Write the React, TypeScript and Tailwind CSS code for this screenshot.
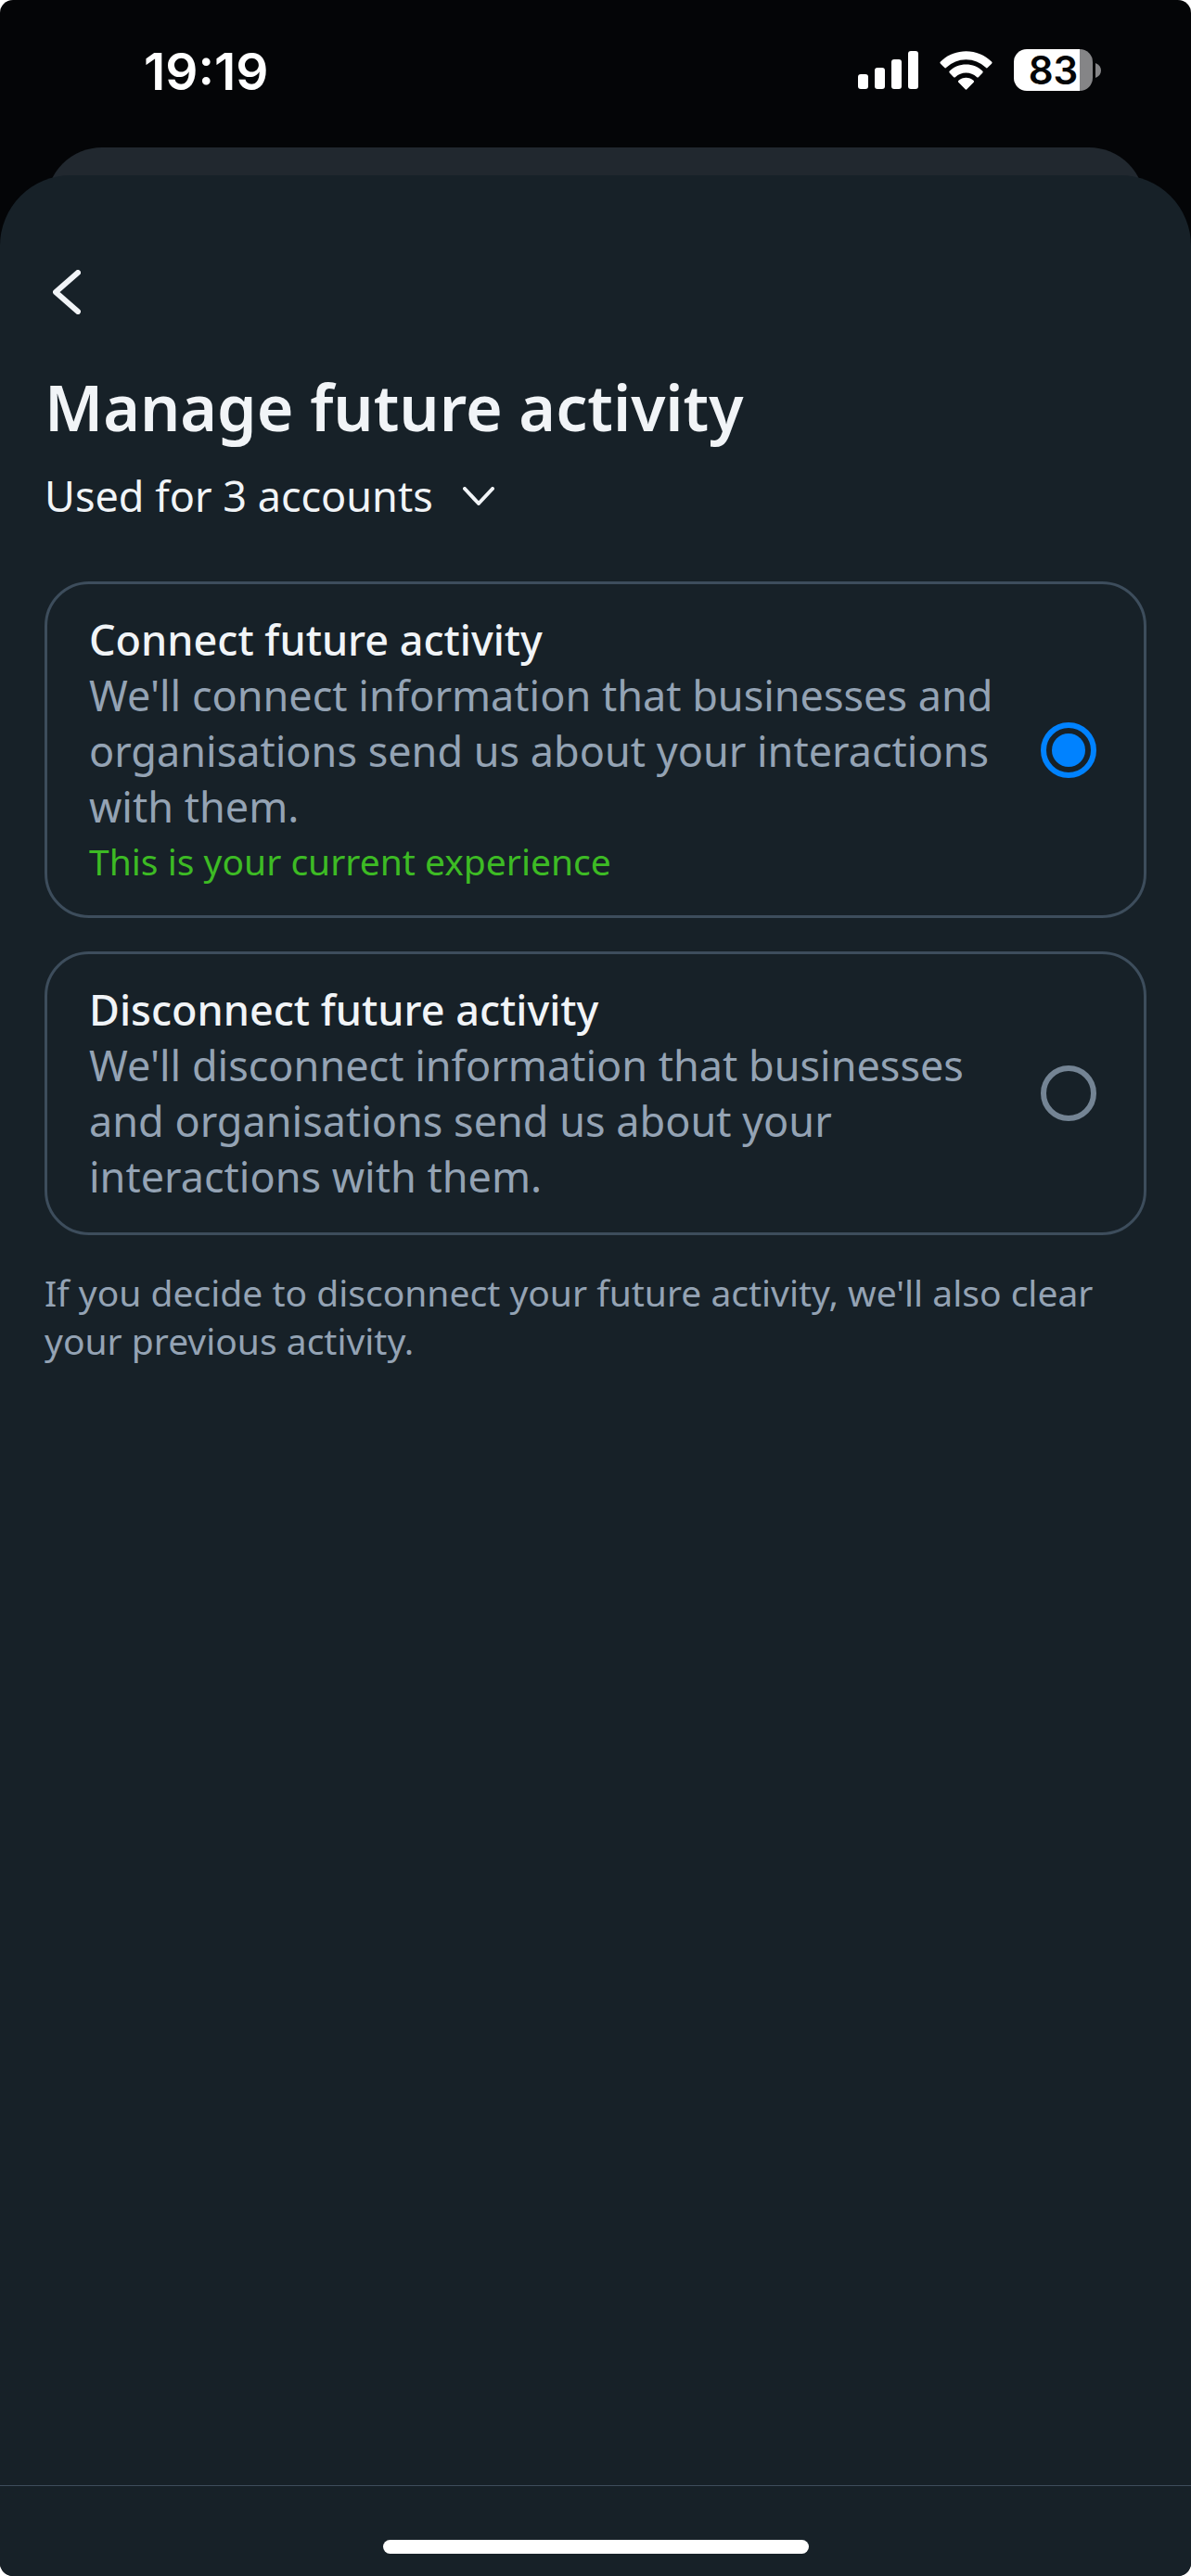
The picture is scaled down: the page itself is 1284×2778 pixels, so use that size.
import { useState } from 'react'

interface Option {
  id: string
  title: string
  description: string
}

const OPTIONS: Option[] = [
  {
    id: 'connect',
    title: 'Connect future activity',
    description:
      "We'll connect information that businesses and organisations send us about your interactions with them.",
  },
  {
    id: 'disconnect',
    title: 'Disconnect future activity',
    description:
      "We'll disconnect information that businesses and organisations send us about your interactions with them.",
  },
]

// What is saved on the account, independent of the selection on screen
const CURRENT = 'connect'

function StatusBar() {
  return (
    <header className="flex h-[159px] items-start justify-between pt-[45px] pr-[97px] pl-[155px] font-['Inter',sans-serif] text-white">
      <time className="text-[55px] leading-[64px] font-semibold">19:19</time>
      <div className="flex h-[61px] items-center gap-[23px]">
        <svg viewBox="0 0 65 41" className="h-[41px] w-[65px]" fill="currentColor" aria-hidden>
          <rect x="0" y="25" width="11" height="16" rx="3" />
          <rect x="18" y="18" width="11" height="23" rx="3" />
          <rect x="36" y="9" width="11" height="32" rx="3" />
          <rect x="54" y="0" width="11" height="41" rx="3" />
        </svg>
        <svg viewBox="0 0 58 42" className="h-[42px] w-[57px]" fill="currentColor" aria-hidden>
          <path d="M29 0c10.800 0 20.600 4.200 28 11.300a1.500 1.500 0 0 1 0 2.200l-4.200 4.300a1.500 1.500 0 0 1-2.200 0A31 31 0 0 0 29 9a31 31 0 0 0-21.600 8.800 1.500 1.500 0 0 1-2.200 0L1 13.500a1.500 1.500 0 0 1 0-2.200C8.400 4.200 18.200 0 29 0z" />
          <path d="M29 14.500c7 0 13.300 2.700 18 7.100a1.500 1.500 0 0 1 0 2.200l-4.200 4.300a1.600 1.600 0 0 1-2.200 0A17 17 0 0 0 29 23.500a17 17 0 0 0-11.600 4.600 1.600 1.600 0 0 1-2.200 0L11 23.800a1.500 1.500 0 0 1 0-2.200c4.700-4.400 11-7.100 18-7.100z" />
          <path d="M29 29c3.100 0 5.900 1.100 8.100 3a1.500 1.500 0 0 1 0 2.200l-7 7.200a1.500 1.500 0 0 1-2.200 0l-7-7.200a1.500 1.500 0 0 1 0-2.200c2.200-1.900 5-3 8.100-3z" />
        </svg>
        <div className="flex items-center gap-[3px]" role="img" aria-label="Battery 83%">
          <div className="flex h-[45px] w-[85px] items-center justify-center rounded-[14px] bg-linear-to-r from-white from-[84%] to-[#858587] to-[84%] text-[42px] leading-[45px] font-semibold text-[#040507]">
            83
          </div>
          <svg viewBox="0 0 6 16" className="h-4 w-1.5" fill="#858587" aria-hidden>
            <path d="M0 0c4 1.500 6 4.500 6 8s-2 6.500-6 8z" />
          </svg>
        </div>
      </div>
    </header>
  )
}

function OptionCard({
  option,
  selected,
  onSelect,
}: {
  option: Option
  selected: boolean
  onSelect: () => void
}) {
  return (
    <label
      htmlFor={option.id}
      className="flex cursor-pointer items-center justify-between gap-10 rounded-[48px] border-3 border-[#3d4d5c] py-[30px] pr-[51px] pl-[45px]"
    >
      <span className="flex-1">
        <span className="block text-[45px] leading-[60px] font-medium text-[#f1f4f7]">
          {option.title}
        </span>
        <span className="block text-[45px] leading-[60px] text-[#94a3b4]">{option.description}</span>
        {option.id === CURRENT && (
          <span className="block text-[39px] leading-[57px] text-[#3dbb24]">
            This is your current experience
          </span>
        )}
      </span>
      <input
        id={option.id}
        type="radio"
        name="future-activity"
        checked={selected}
        onChange={onSelect}
        className="size-[60px] shrink-0 appearance-none rounded-full border-6 border-[#748494] p-1.5 checked:border-[#0082ff] checked:bg-[#0082ff] checked:bg-clip-content"
      />
    </label>
  )
}

export default function App() {
  const [selected, setSelected] = useState(CURRENT)

  return (
    <div className="bg-white">
      <div className="flex min-h-screen flex-col overflow-hidden rounded-[14px] bg-[#040507]">
        <StatusBar />

        {/* Edge of the sheet stacked behind this one */}
        <div className="mx-[50px] h-[30px]">
          <div className="h-[120px] rounded-t-[60px] bg-[#21282f]" />
        </div>

        <div className="relative flex flex-1 flex-col rounded-t-[76px] bg-[#172128] font-['Noto_Sans',sans-serif]">
          <main className="flex-1 px-12 pt-[90px]">
            <button type="button" aria-label="Back" className="flex h-[72px] items-center pl-[9px]">
              <svg
                viewBox="0 0 30 48"
                className="h-12 w-[30px]"
                fill="none"
                stroke="#f1f4f7"
                strokeWidth="6"
                strokeLinecap="round"
                strokeLinejoin="round"
                aria-hidden
              >
                <path d="M27 3 3 24l24 21" />
              </svg>
            </button>

            <h1 className="mt-10 text-[68px] leading-[96px] font-semibold text-[#f1f4f7]">
              Manage future activity
            </h1>
            <button
              type="button"
              className="mt-[18px] flex items-center gap-8 text-[45px] leading-[60px] text-[#f1f4f7]"
            >
              Used for 3 accounts
              <svg
                viewBox="0 0 34 20"
                className="h-5 w-[34px]"
                fill="none"
                stroke="currentColor"
                strokeWidth="4"
                strokeLinecap="round"
                strokeLinejoin="round"
                aria-hidden
              >
                <path d="M2 2l15 16L32 2" />
              </svg>
            </button>

            <div role="radiogroup" aria-label="Manage future activity" className="mt-[62px] flex flex-col gap-9">
              {OPTIONS.map((option) => (
                <OptionCard
                  key={option.id}
                  option={option}
                  selected={selected === option.id}
                  onSelect={() => setSelected(option.id)}
                />
              ))}
            </div>

            <p className="mt-9 text-[39px] leading-[52px] text-[#94a3b4]">
              If you decide to disconnect your future activity, we'll also clear your previous activity.
            </p>
          </main>

          <footer className="flex h-[98px] items-end justify-center border-t border-[#3d4d5c] pb-6">
            <div className="h-[15px] w-[459px] rounded-full bg-white" />
          </footer>
        </div>
      </div>
    </div>
  )
}
